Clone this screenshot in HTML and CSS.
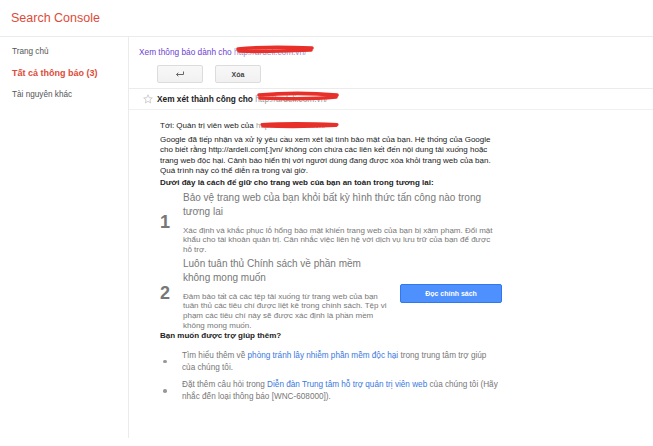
FILE: index.html
```html
<!doctype html>
<html lang="vi">
    <head>
        <meta charset="UTF-8" />
        <meta name="viewport" content="width=device-width, initial-scale=1.0" />
        <title>Search Console</title>
        <link rel="stylesheet" href="styles.css">
    </head>
    <body>
        <div class="header">
            <span class="logo">Search Console</span>
        </div>
        <div class="layout">
            <div class="sidebar">
                <a class="nav-item" href="#">Trang chủ</a>
                <a class="nav-item active" href="#">Tất cả thông báo (3)</a>
                <a class="nav-item" href="#">Tài nguyên khác</a>
            </div>
            <div class="main">
                <div class="notice-link">
                    Xem thông báo dành cho
                    <span class="redact">http://ardeli.com.vn/
                        <svg class="scribble" width="78" height="10" viewBox="0 0 78 10">
                            <path d="M2 4 C 20 2, 45 2, 76 3" />
                            <path d="M3 6 C 25 7, 50 6, 75 5" />
                        </svg>
                    </span>
                </div>
                <div class="toolbar">
                    <button class="btn" title="Quay lại">
                        <svg width="10" height="6" viewBox="0 0 10 6">
                            <path d="M8.5 0.5 V3.5 H1.5 M3.3 1.7 L1.5 3.5 L3.3 5.3" />
                        </svg>
                    </button>
                    <button class="btn">Xóa</button>
                </div>
                <div class="subject">
                    <svg class="star" width="10" height="10" viewBox="0 0 10 10">
                        <path d="M5 0.8 L6.2 3.7 L9.3 3.9 L6.9 5.9 L7.7 9 L5 7.3 L2.3 9 L3.1 5.9 L0.7 3.9 L3.8 3.7 Z" />
                    </svg>
                    <span>Xem xét thành công cho
                        <span class="redact">http://ardeli.com.vn/
                            <svg class="scribble big" width="82" height="11" viewBox="0 0 82 11">
                                <path d="M2 4 C 25 2, 55 2, 80 4" />
                                <path d="M3 7 C 30 8, 60 8, 79 6" />
                            </svg>
                        </span>
                    </span>
                </div>
                <div class="message">
                    <p class="to">Tới: Quản trị viên web của
                        <span class="redact">http://ardeli.com.vn/
                            <svg class="scribble small" width="80" height="8" viewBox="0 0 80 8">
                                <path d="M2 3.5 C 25 2, 55 2.5, 77 3.5" />
                                <path d="M3 5 C 30 6, 55 5.5, 76 4.5" />
                            </svg>
                        </span>
                    </p>
                    <p>Google đã tiếp nhận và xử lý yêu cầu xem xét lại tình bảo mật của bạn. Hệ thống của Google cho biết rằng http://ardeli.com[.]vn/ không còn chứa các liên kết đến nội dung tải xuống hoặc trang web độc hại. Cảnh báo hiển thị với người dùng đang được xóa khỏi trang web của bạn. Quá trình này có thể diễn ra trong vài giờ.</p>
                    <p class="lead">Dưới đây là cách để giữ cho trang web của bạn an toàn trong tương lai:</p>

                    <div class="steps">
                        <div class="step">
                            <div class="step-num">1</div>
                            <div class="step-body">
                                <div class="step-title">Bảo vệ trang web của bạn khỏi bất kỳ hình thức tấn công nào trong tương lai</div>
                                <div class="step-desc">Xác định và khắc phục lỗ hổng bảo mật khiến trang web của bạn bị xâm phạm. Đổi mật khẩu cho tài khoản quản trị. Cân nhắc việc liên hệ với dịch vụ lưu trữ của bạn để được hỗ trợ.</div>
                            </div>
                        </div>
                        <div class="step">
                            <div class="step-num">2</div>
                            <div class="step-body narrow">
                                <div class="step-title">Luôn tuân thủ Chính sách về phần mềm không mong muốn</div>
                                <div class="step-desc">Đảm bảo tất cả các tệp tải xuống từ trang web của bạn tuân thủ các tiêu chí được liệt kê trong chính sách. Tệp vi phạm các tiêu chí này sẽ được xác định là phần mềm không mong muốn.</div>
                            </div>
                            <button class="btn-primary">Đọc chính sách</button>
                        </div>
                    </div>

                    <p class="lead">Bạn muốn được trợ giúp thêm?</p>
                    <ul class="help">
                        <li>
                            <span class="dot"></span>
                            <span class="help-text">Tìm hiểu thêm về <a href="#">phòng tránh lây nhiễm phần mềm độc hại</a> trong trung tâm trợ giúp của chúng tôi.</span>
                        </li>
                        <li>
                            <span class="dot"></span>
                            <span class="help-text">Đặt thêm câu hỏi trong <a href="#">Diễn đàn Trung tâm hỗ trợ quản trị viên web</a> của chúng tôi (Hãy nhắc đến loại thông báo [WNC-608000]).</span>
                        </li>
                    </ul>
                </div>
            </div>
        </div>
    </body>
</html>
```

FILE: styles.css
```css
body {
    margin: 0;
    font-family: "Liberation Sans", Arial, sans-serif;
    background-color: #ffffff;
    color: #222;
}
.header {
    height: 36px;
    display: flex;
    align-items: center;
    padding-left: 11px;
    border-bottom: 1px solid #ebebeb;
}
.logo {
    font-size: 12.5px;
    color: #dd4b39;
}
.layout {
    display: flex;
}
.sidebar {
    width: 128px;
    flex-shrink: 0;
    padding-top: 4px;
    border-right: 1px solid #ebebeb;
}
.nav-item {
    display: block;
    padding-left: 12px;
    font-size: 8.2px;
    line-height: 21.5px;
    color: #555;
    text-decoration: none;
}
.nav-item.active {
    color: #dd4b39;
    font-weight: bold;
    font-size: 9px;
}
.main {
    flex: 1;
}
.notice-link {
    padding: 9px 10px 0;
    font-size: 8.3px;
    line-height: 12px;
    color: #6b3fd0;
}
.redact {
    position: relative;
    color: #9c8fd6;
}
.scribble {
    position: absolute;
    left: 2px;
    top: -2px;
}
.scribble path {
    fill: none;
    stroke: #e8302a;
    stroke-width: 3.6;
    stroke-linecap: round;
}
.scribble.big {
    left: 2px;
    top: -3px;
}
.scribble.small {
    left: 4px;
    top: 0;
}
.scribble.small path {
    stroke-width: 3.2;
}
.subject .redact,
.to .redact {
    color: #999;
    font-weight: normal;
}
.toolbar {
    display: flex;
    gap: 12px;
    padding: 7px 0 5px 28px;
    border-bottom: 1px solid #ebebeb;
}
.btn {
    width: 46px;
    height: 18px;
    padding: 0;
    display: flex;
    align-items: center;
    justify-content: center;
    background: linear-gradient(#f8f8f8, #f1f1f1);
    border: 1px solid #dcdcdc;
    border-radius: 2px;
    font-family: inherit;
    font-size: 7px;
    font-weight: bold;
    color: #444;
}
.btn svg path {
    fill: none;
    stroke: #666;
    stroke-width: 1;
}
.subject {
    height: 20px;
    display: flex;
    align-items: center;
    gap: 4px;
    padding-left: 14px;
    border-bottom: 1px solid #f0f0f0;
    font-size: 8.3px;
    font-weight: bold;
    color: #222;
}
.star path {
    fill: none;
    stroke: #c4c4c4;
    stroke-width: 0.8;
}
.message {
    width: 342px;
    padding: 11px 0 36px 31px;
    font-size: 8px;
    line-height: 10.6px;
}
.message p {
    margin: 0;
}
.message p.to {
    margin-bottom: 3px;
}
.message p.lead {
    font-weight: bold;
    margin-top: 1px;
}
.steps {
    margin: 2px 0 1px;
}
.step {
    display: flex;
    align-items: center;
}
.step + .step {
    margin-top: 2px;
}
.step-num {
    width: 23px;
    flex-shrink: 0;
    font-size: 18px;
    font-weight: bold;
    color: #777;
}
.step-body {
    flex: 0 1 314px;
}
.step-body.narrow {
    flex: 0 0 207px;
}
.step-title {
    font-size: 10px;
    line-height: 14px;
    color: #777;
    margin-bottom: 7px;
}
.step-desc {
    line-height: 9.7px;
    color: #777;
}
.btn-primary {
    margin-left: auto;
    width: 102px;
    height: 19px;
    padding: 0;
    background-color: #4d90fe;
    border: 1px solid #3079ed;
    border-radius: 2px;
    color: #fff;
    font-family: inherit;
    font-size: 7px;
    font-weight: bold;
}
.help {
    list-style: none;
    margin: 8px 0 0;
    padding: 0 1px 0 0;
    display: flex;
    flex-direction: column;
    gap: 6px;
}
.help li {
    display: flex;
    align-items: center;
}
.dot {
    width: 22px;
    flex-shrink: 0;
    display: flex;
    padding-left: 3px;
    box-sizing: border-box;
}
.dot::before {
    content: "";
    width: 3.5px;
    height: 3.5px;
    border-radius: 50%;
    background-color: #999;
}
.help-text {
    font-size: 8.2px;
    line-height: 11.6px;
    color: #777;
}
.help-text a {
    color: #3a78e0;
    text-decoration: none;
}
```
